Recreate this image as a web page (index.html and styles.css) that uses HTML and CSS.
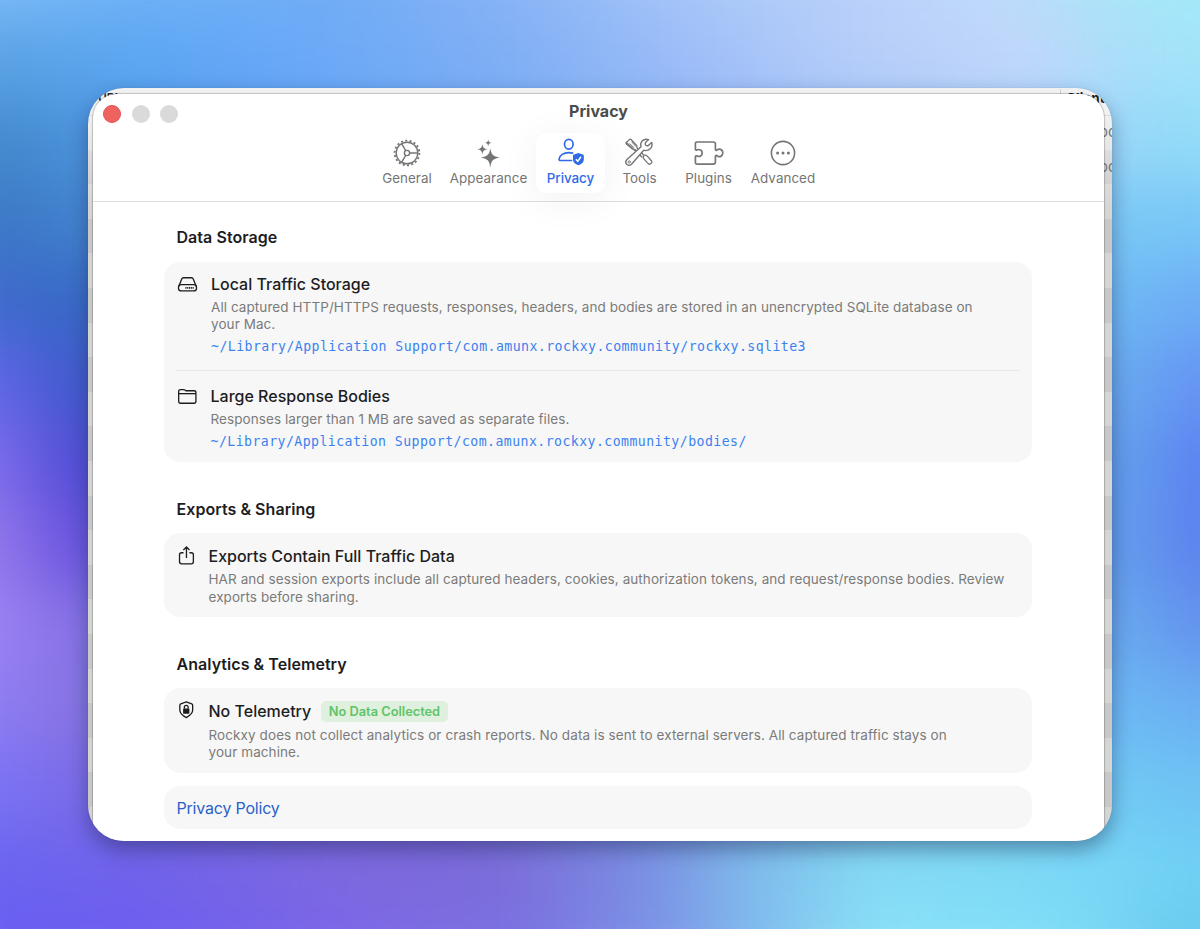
FILE: index.html
```html
<!DOCTYPE html>
<html lang="en">
  <head>
    <meta charset="UTF-8" />
    <meta name="viewport" content="width=device-width, initial-scale=1.0" />
    <title>Privacy</title>
    <link rel="stylesheet" href="styles.css">
  </head>
  <body>
    <!-- wallpaper: colour bands from top to bottom, blurred together -->
    <div class="desktop">
      <div class="wallpaper">
        <div class="band band-1"></div>
        <div class="band band-2"></div>
        <div class="band band-3"></div>
        <div class="band band-4"></div>
        <div class="band band-5"></div>
        <div class="band band-6"></div>
        <div class="band band-7"></div>
        <div class="band band-8"></div>
        <div class="band band-9"></div>
        <div class="band band-10"></div>
        <div class="band band-11"></div>
        <div class="band band-12"></div>
        <div class="band band-13"></div>
      </div>
    </div>

    <div class="back-window">
      <span class="back-text back-url">URL</span>
      <span class="back-text back-client">Client</span>
      <span class="back-text back-cell cell-1">oc</span>
      <span class="back-text back-cell cell-2">oc</span>

      <div class="window">
        <header class="toolbar">
          <div class="titlebar">
            <div class="lights">
              <span class="light light-close"></span>
              <span class="light"></span>
              <span class="light"></span>
            </div>
            <h1 class="title">Privacy</h1>
          </div>
          <nav class="tabs">
            <a class="tab">
              <svg class="tab-icon" viewBox="0 0 32 32">
                <circle cx="16" cy="16" r="10.8" />
                <circle cx="16" cy="16" r="12.4" stroke-width="1.8" stroke-dasharray="2 2.33" />
                <circle cx="16" cy="16" r="2.6" />
                <path d="M18.6 16H26.8M14.7 13.7L10.6 6.7M14.7 18.3L10.6 25.3" />
              </svg>
              <span class="tab-label">General</span>
            </a>
            <a class="tab">
              <svg class="tab-icon solid" viewBox="0 0 32 32">
                <path d="M17.3 11.2C18.4 17.8 19.7 19.1 26.8 20.5C19.7 22 18.4 23.3 17.3 30.4C16.2 23.3 14.8 22 7.8 20.5C14.8 19.1 16.2 17.8 17.3 11.2Z" />
                <path d="M9.4 7C10 10.8 10.8 11.6 14.6 12.3C10.8 13 10 13.8 9.4 17.6C8.7 13.8 8 13 4.2 12.3C8 11.6 8.7 10.8 9.4 7Z" />
                <path d="M15.2 2.4C15.7 4.9 16.1 5.3 18.6 5.8C16.1 6.3 15.7 6.7 15.2 9.2C14.7 6.7 14.3 6.3 11.8 5.8C14.3 5.3 14.7 4.9 15.2 2.4Z" />
              </svg>
              <span class="tab-label">Appearance</span>
            </a>
            <a class="tab active">
              <svg class="tab-icon" viewBox="0 0 32 32">
                <ellipse cx="13.8" cy="7.2" rx="4.3" ry="4.9" stroke-width="1.7" />
                <path d="M17.3 23.5H5.4Q4 23.5 4.1 22C4.6 18.3 8.6 15.6 13.8 15.6Q16.3 15.6 18.3 16.3" stroke-width="1.7" />
                <path class="fill" d="M23.4 15.9L28.4 17.8Q28.8 18 28.8 18.5V22.4C28.8 25.2 26.8 27 23.4 28.3C20 27 18 25.2 18 22.4V18.5Q18 18 18.4 17.8Z" />
                <path class="tick" d="M20.9 22.2L22.7 24.4L26 19.8" />
              </svg>
              <span class="tab-label">Privacy</span>
            </a>
            <a class="tab">
              <svg class="tab-icon icon-tools" viewBox="0 0 32 32">
                <path d="M3.3 5.5L6.4 2.6Q7.4 1.8 8.3 2.7L13.4 8.2Q14 9 13.9 10.2L14.2 11L20.8 18.2Q23.2 17.9 24.3 19.1L28.6 24Q29.3 25.3 28 26.6Q26.7 27.7 25.4 26.9L21.1 22.1Q20 20.8 20.5 18.9M18.9 20L12.3 12.7Q10.6 13 9.5 11.9L3.4 6.9Q2.6 6.2 3.3 5.5Z" stroke-width="1.3" />
                <path d="M6.6 6.5L11.3 11M8.7 4.8L13 9.6" stroke-width="1" />
                <path d="M25.6 2.6Q21.5 1.3 18.9 4.2Q17 6.6 18 9.7L3.7 22.8Q1.7 25.2 3.8 27.5Q6.1 29.3 8.5 27.2L20.7 13.2Q24.3 14.5 27.2 11.8Q29.9 9 28.7 5.4L25.3 8.6Q23.8 9.2 22.7 8.2Q21.8 7 22.5 5.6Z" stroke-width="1.4" class="cover" />
                <circle cx="6.3" cy="25" r="1.1" stroke-width="1" />
              </svg>
              <span class="tab-label">Tools</span>
            </a>
            <a class="tab">
              <svg class="tab-icon" viewBox="0 0 32 32">
                <path d="M2.4 12V6.6Q2.4 5 4 5H20.2Q22.4 5 22.4 7V12.1Q22.4 13.7 23.6 13.2L25 12.4C27.4 11.4 29.8 13.2 29.8 15.8C29.8 18.6 27.5 20.4 25 19.4L23.6 18.5Q22.4 18 22.4 19.6V25Q22.4 27.1 20.2 27.1H4Q2.4 27.1 2.4 25.4V20Q2.4 18.3 4 18.9C6.7 20.3 9.2 18.6 9.2 16C9.2 13.4 6.8 11.7 4 12.9Q2.4 13.5 2.4 12Z" stroke-width="1.7" />
              </svg>
              <span class="tab-label">Plugins</span>
            </a>
            <a class="tab">
              <svg class="tab-icon" viewBox="0 0 32 32">
                <circle cx="16" cy="16" r="11.6" stroke-width="1.6" />
                <circle class="fill" cx="10.6" cy="16" r="1.5" />
                <circle class="fill" cx="16" cy="16" r="1.5" />
                <circle class="fill" cx="21.4" cy="16" r="1.5" />
              </svg>
              <span class="tab-label">Advanced</span>
            </a>
          </nav>
        </header>

        <main class="content">
          <section class="section">
            <h2 class="section-title">Data Storage</h2>
            <div class="card card-first">
              <div class="row">
                <svg class="row-icon" viewBox="0 0 20 20">
                  <path d="M1.8 11.6L4.4 4.9Q4.9 3.6 6.3 3.6H13.7Q15.1 3.6 15.6 4.9L18.2 11.6" />
                  <rect x="1.4" y="10.2" width="17.2" height="5.9" rx="2.6" />
                  <path d="M8 13.2H16.4" stroke-width="1.8" stroke-dasharray="1.1 0.6" />
                </svg>
                <div class="row-text">
                  <h3 class="row-title">Local Traffic Storage</h3>
                  <p class="desc">All captured HTTP/HTTPS requests, responses, headers, and bodies are stored in an unencrypted SQLite database on<br>your Mac.</p>
                  <code class="path">~/Library/Application Support/com.amunx.rockxy.community/rockxy.sqlite3</code>
                </div>
              </div>
              <div class="row row-divided">
                <svg class="row-icon" viewBox="0 0 20 20">
                  <path d="M1.6 14.6V5.1Q1.6 3.4 3.3 3.4H6.2Q7 3.4 7.6 3.9L8.4 4.5H16.2Q18 4.5 18 6.2V14.6Q18 16.4 16.3 16.4H3.3Q1.6 16.4 1.6 14.6Z" />
                  <path d="M1.8 7.3H17.8" />
                </svg>
                <div class="row-text">
                  <h3 class="row-title">Large Response Bodies</h3>
                  <p class="desc">Responses larger than 1 MB are saved as separate files.</p>
                  <code class="path">~/Library/Application Support/com.amunx.rockxy.community/bodies/</code>
                </div>
              </div>
            </div>
          </section>

          <section class="section">
            <h2 class="section-title">Exports &amp; Sharing</h2>
            <div class="card">
              <div class="row row-narrow">
                <svg class="row-icon" viewBox="0 0 20 20">
                  <path d="M6.2 6.4H4.4Q2.4 6.4 2.4 8.4V15Q2.4 17 4.4 17H13.6Q15.6 17 15.6 15V8.4Q15.6 6.4 13.6 6.4H11.8" />
                  <path d="M9 11.4V1M6.1 3.8L9 0.9L11.9 3.8" />
                </svg>
                <div class="row-text">
                  <h3 class="row-title">Exports Contain Full Traffic Data</h3>
                  <p class="desc">HAR and session exports include all captured headers, cookies, authorization tokens, and request/response bodies. Review<br>exports before sharing.</p>
                </div>
              </div>
            </div>
          </section>

          <section class="section">
            <h2 class="section-title">Analytics &amp; Telemetry</h2>
            <div class="card">
              <div class="row row-narrow row-badge">
                <svg class="row-icon" viewBox="0 0 20 20">
                  <path d="M8.8 0.9L14 2.7Q14.9 3.1 14.9 4.1V8.9C14.9 12.1 12.6 13.9 8.8 15.8C5 13.9 2.7 12.1 2.7 8.9V4.1Q2.7 3.1 3.6 2.7Z" />
                  <rect class="fill" x="5.8" y="7.2" width="6" height="5" rx="0.8" />
                  <path d="M7 7.4V5.9Q7 4.1 8.8 4.1Q10.6 4.1 10.6 5.9V7.4" />
                </svg>
                <div class="row-text">
                  <div class="title-line">
                    <h3 class="row-title">No Telemetry</h3>
                    <span class="badge">No Data Collected</span>
                  </div>
                  <p class="desc">Rockxy does not collect analytics or crash reports. No data is sent to external servers. All captured traffic stays on<br>your machine.</p>
                </div>
              </div>
            </div>
            <div class="card card-link">
              <a class="link">Privacy Policy</a>
            </div>
          </section>
        </main>
      </div>
    </div>
  </body>
</html>
```
FILE: styles.css
```css
* {
  box-sizing: border-box;
}
body {
  margin: 0;
  height: 929px;
  overflow: hidden;
  position: relative;
  padding: 88px;
  font-family: Inter, "Liberation Sans", sans-serif;
  color: #1d1d1f;
}
h1,
h2,
h3,
p {
  margin: 0;
}

/* wallpaper */
.desktop {
  position: absolute;
  inset: 0;
  overflow: hidden;
}
.wallpaper {
  position: absolute;
  inset: -60px;
  display: grid;
  grid-template-rows: repeat(13, 1fr);
  filter: blur(28px);
}
.band-1 {
  background: linear-gradient(90deg, #7cbcf8 60px, #6db2f8 200px, #70acf5 400px, #8ab4f6 580px, #a8c8f8 760px, #bcd2fa 940px, #bedafb 1060px, #a9e6fa 1180px, #a4e9fa 1260px);
}
.band-2 {
  background: linear-gradient(90deg, #5aa2e4 60px, #5ca6f2 200px, #68a8f8 340px, #7eaef4 560px, #9cbcf8 740px, #b4ccf9 900px, #c2d6fa 1080px, #a8dff9 1190px, #a2e4f9 1260px);
}
.band-3 {
  background: linear-gradient(90deg, #4389cc 60px, #4a92dc 140px, #5ea0f0 400px, #94b8f4 800px, #a6d4f8 1130px, #94d8f8 1200px, #92dcf8 1260px);
}
.band-4 {
  background: linear-gradient(90deg, #3c77c6 60px, #4181cc 140px, #6aa0f0 400px, #7ac8f4 1180px, #78c6f8 1260px);
}
.band-5 {
  background: linear-gradient(90deg, #406bce 60px, #3567c4 140px, #6aa0f0 400px, #6eb9f3 1180px, #6cabf6 1260px);
}
.band-6 {
  background: linear-gradient(90deg, #6267e8 60px, #3c56c8 140px, #6aa0f0 400px, #68aaee 1180px, #6592f5 1260px);
}
.band-7 {
  background: linear-gradient(90deg, #7e6eec 60px, #4d47d2 140px, #6aa0f0 400px, #649eec 1190px, #5a80f2 1260px);
}
.band-8 {
  background: linear-gradient(90deg, #9479ec 60px, #654ddc 140px, #6aa0f0 400px, #649cec 1190px, #5b80ef 1260px);
}
.band-9 {
  background: linear-gradient(90deg, #9c82f4 60px, #846ee2 140px, #6aa0f0 400px, #68a8ee 1190px, #6390ee 1260px);
}
.band-10 {
  background: linear-gradient(90deg, #8e7ef4 60px, #8670e0 140px, #6aa0f0 400px, #6cb8f4 1190px, #6aaef2 1260px);
}
.band-11 {
  background: linear-gradient(90deg, #7a72f4 60px, #7a6ae4 160px, #7a6ae0 500px, #80a8e8 780px, #7ed0f0 1000px, #70c8f4 1190px, #6ec2f4 1260px);
}
.band-12 {
  background: linear-gradient(90deg, #6b64f0 60px, #6f62ea 200px, #7c68de 400px, #7b6bd8 560px, #7a8ce2 700px, #7ebaea 810px, #84daf4 930px, #7ad8f6 1130px, #6fcff4 1260px);
}
.band-13 {
  background: linear-gradient(90deg, #685cf2 60px, #705ff0 240px, #7d68e8 420px, #7b72e2 580px, #7c96e8 720px, #84c4f0 840px, #8ce2f8 940px, #80def8 1120px, #68c8ec 1260px);
}

/* window behind, only its edges can be seen */
.back-window {
  position: relative;
  width: 1024px;
  height: 753px;
  padding: 6px 8px 0 5px;
  border-radius: 36px;
  overflow: hidden;
  background:
    linear-gradient(180deg, #f1f1f1 0, #f1f1f1 27px, #dcdcdc 27px, #dcdcdc 28px, transparent 28px),
    linear-gradient(180deg, rgba(255, 255, 255, 0.7) 20px, rgba(255, 255, 255, 0) 120px),
    repeating-linear-gradient(180deg, #d5d5d4 0, #d5d5d4 34.6px, #c8c8c8 34.6px, #c8c8c8 69.2px);
  background-position: 0 0, 0 0, 0 27px;
  box-shadow: 0 0 1px rgba(40, 50, 80, 0.3), 0 9px 20px rgba(20, 30, 70, 0.4);
}
.back-text {
  position: absolute;
  font-size: 14px;
  line-height: 18px;
  color: #222;
}
.back-url {
  left: 10px;
  top: 1px;
  font-size: 12px;
  font-weight: 600;
}
.back-client {
  left: 972px;
  top: 1px;
  padding-left: 5px;
  border-left: 1px solid #d0d0d0;
  font-size: 13.5px;
  font-weight: 700;
}
.back-cell {
  left: 1011px;
  font-size: 15px;
  color: #777;
}
.cell-1 {
  top: 35px;
}
.cell-2 {
  top: 70px;
}

/* settings window */
.window {
  position: relative;
  height: 747px;
  background: #fff;
  border-radius: 24px 24px 0 0;
  box-shadow: 0 0 1px 1px rgba(0, 0, 0, 0.2);
}
.toolbar {
  height: 108px;
  border-bottom: 1px solid #dedede;
}
.titlebar {
  display: grid;
  grid-template-columns: 1fr auto 1fr;
  height: 39px;
  padding: 0 10px;
}
.lights {
  display: flex;
  gap: 10.5px;
  padding-top: 10.5px;
}
.light {
  width: 18px;
  height: 18px;
  border-radius: 50%;
  background: #dadada;
}
.light-close {
  background: #ee6260;
  border: 1px solid #dd5452;
}
.title {
  padding-top: 6px;
  font-size: 16px;
  line-height: 22px;
  font-weight: 700;
  color: #4c4c4c;
}
.tabs {
  display: flex;
  justify-content: center;
  padding-right: 1px;
}
.tab {
  display: flex;
  flex-direction: column;
  align-items: center;
  width: 69px;
  height: 60px;
  padding-top: 4px;
  border-radius: 10px;
  color: #757575;
}
.tab:nth-child(1) {
  width: 68px;
}
.tab:nth-child(2) {
  width: 95px;
}
.tab:nth-child(6) {
  width: 80px;
}
.tab.active {
  color: #2f6be9;
  background: #fff;
  box-shadow: 0 6px 40px rgba(0, 0, 0, 0.06);
}
.tab-icon {
  width: 32px;
  height: 32px;
  fill: none;
  stroke: currentColor;
  stroke-width: 1.4;
  stroke-linecap: butt;
  stroke-linejoin: round;
}
.icon-tools {
  margin-left: -2px;
}
.tab-icon.solid,
.fill {
  fill: currentColor;
  stroke: none;
}
.tab-icon .tick {
  stroke: #fff;
  stroke-width: 1.5;
}
.tab-icon .cover {
  fill: #fff;
}
.tab-label {
  font-size: 13.4px;
  line-height: 18px;
  font-weight: 400;
  letter-spacing: 0.05px;
  white-space: nowrap;
}
.active .tab-label {
  font-weight: 500;
  letter-spacing: -0.05px;
}

/* content */
.content {
  padding: 24px 72px 0 71px;
}
.section {
  margin-bottom: 36px;
}
.section-title {
  padding-left: 12.5px;
  margin-bottom: 12px;
  font-size: 16px;
  line-height: 23px;
  font-weight: 600;
  letter-spacing: 0.05px;
  white-space: nowrap;
}
.card {
  padding: 0 12px;
  border-radius: 16px;
  background: #f7f7f7;
}
.card-first {
  margin-top: 13px;
}
.row {
  display: flex;
  gap: 13px;
  padding: 12px 0 14px 1px;
}
.row-divided {
  border-top: 1px solid #e8e8e8;
  padding: 15px 0 11px 0.5px;
}
.row-icon {
  flex: none;
  width: 21px;
  height: 21px;
  fill: none;
  stroke: #1d1d1f;
  stroke-width: 1.25;
}
.row-icon .fill {
  fill: #1d1d1f;
}
.row-narrow {
  gap: 11px;
  padding: 13px 0 11px 0.5px;
}
.row-title {
  font-size: 16px;
  line-height: 21px;
  font-weight: 500;
  white-space: nowrap;
}
.desc {
  margin-top: 4px;
  font-size: 13.5px;
  line-height: 17.4px;
  letter-spacing: 0.075px;
  color: #7b7b7b;
  white-space: nowrap;
}
.row-badge .desc {
  margin-top: 5px;
  letter-spacing: 0.09px;
}
.path {
  display: block;
  margin-top: 3px;
  font-family: "DejaVu Sans Mono", monospace;
  font-size: 13.2px;
  line-height: 19px;
  letter-spacing: 0.44px;
  color: #3b82f0;
  white-space: nowrap;
}
.row-divided .path {
  margin-top: 4px;
}
.title-line {
  display: flex;
  gap: 10px;
}
.badge {
  height: 21px;
  padding: 0 7.5px;
  border-radius: 5px;
  background: #dff0df;
  color: #5fc467;
  font-size: 12.8px;
  line-height: 21px;
  font-weight: 600;
}
.card-link {
  margin-top: 13px;
  height: 43px;
}
.link {
  padding-left: 0.5px;
  font-size: 16px;
  line-height: 44px;
  letter-spacing: -0.2px;
  color: #2a61c9;
}
```
